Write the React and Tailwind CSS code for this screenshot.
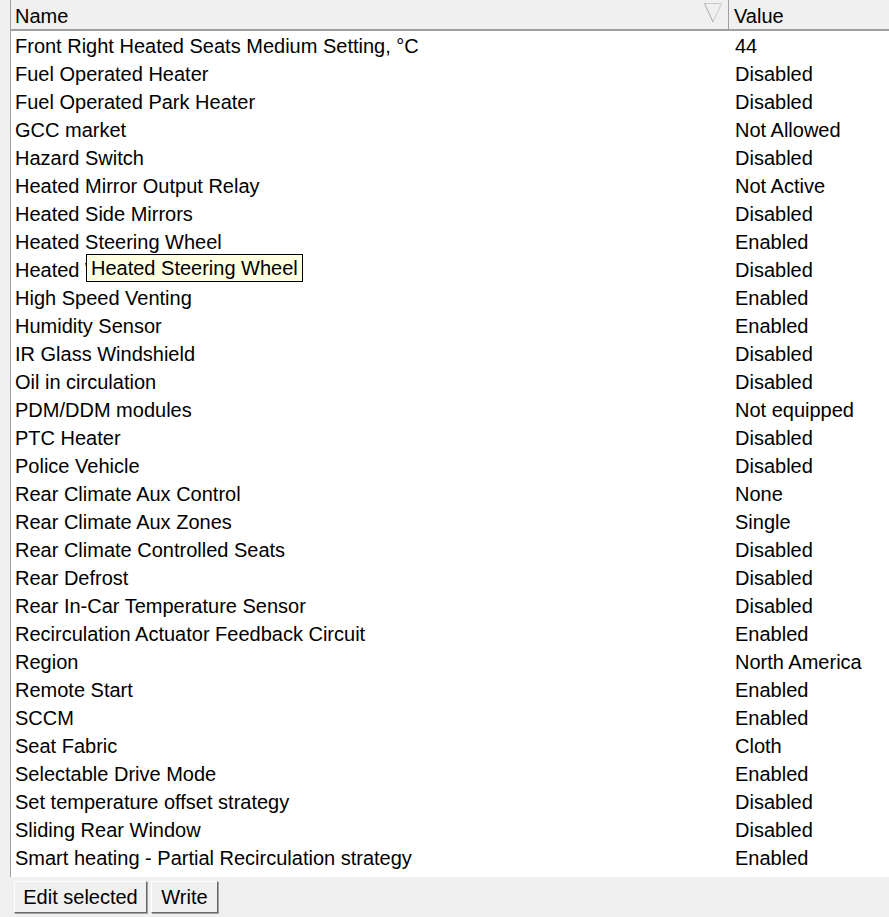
import React from "react";

const rows = [
  ["Front Right Heated Seats Medium Setting, °C", "44"],
  ["Fuel Operated Heater", "Disabled"],
  ["Fuel Operated Park Heater", "Disabled"],
  ["GCC market", "Not Allowed"],
  ["Hazard Switch", "Disabled"],
  ["Heated Mirror Output Relay", "Not Active"],
  ["Heated Side Mirrors", "Disabled"],
  ["Heated Steering Wheel", "Enabled"],
  ["Heated Windshield", "Disabled"],
  ["High Speed Venting", "Enabled"],
  ["Humidity Sensor", "Enabled"],
  ["IR Glass Windshield", "Disabled"],
  ["Oil in circulation", "Disabled"],
  ["PDM/DDM modules", "Not equipped"],
  ["PTC Heater", "Disabled"],
  ["Police Vehicle", "Disabled"],
  ["Rear Climate Aux Control", "None"],
  ["Rear Climate Aux Zones", "Single"],
  ["Rear Climate Controlled Seats", "Disabled"],
  ["Rear Defrost", "Disabled"],
  ["Rear In-Car Temperature Sensor", "Disabled"],
  ["Recirculation Actuator Feedback Circuit", "Enabled"],
  ["Region", "North America"],
  ["Remote Start", "Enabled"],
  ["SCCM", "Enabled"],
  ["Seat Fabric", "Cloth"],
  ["Selectable Drive Mode", "Enabled"],
  ["Set temperature offset strategy", "Disabled"],
  ["Sliding Rear Window", "Disabled"],
  ["Smart heating - Partial Recirculation strategy", "Enabled"],
];

function WinButton({ children, className }) {
  return (
    <button
      className={
        "h-[32px] bg-[#f0f0f0] text-black border border-t-white border-l-white border-r-[#696969] border-b-[#696969] shadow-[1px_1px_0_#a0a0a0] " +
        className
      }
    >
      {children}
    </button>
  );
}

export default function App() {
  return (
    <div
      className="w-[889px] h-[917px] bg-[#f0f0f0] flex flex-col overflow-hidden text-[20px] text-black"
      style={{ fontFamily: '"Liberation Sans", Arial, sans-serif' }}
    >
      <div className="flex-1 flex pl-[10px] min-h-0">
        <div className="flex-1 flex flex-col border-l border-[#a0a0a0] bg-white relative">
          {/* Header */}
          <div className="flex h-[31px] bg-[#f0f0f0] border-b-2 border-[#a0a0a0]">
            <div className="w-[718px] flex items-center pl-[4px] pt-[2px] relative border-r border-[#a0a0a0]">
              <span className="leading-none">Name</span>
              <svg
                className="absolute right-[6px] top-[3px]"
                width="18"
                height="20"
                viewBox="0 0 18 20"
              >
                <path d="M0.5 0.5 L17.5 0.5 L9 19" fill="none" stroke="#c8c8c8" strokeWidth="1" />
                <path d="M0.5 0.5 L9 19" fill="none" stroke="#a8a8a8" strokeWidth="1" />
              </svg>
            </div>
            <div className="flex-1 flex items-center pl-[5px] pt-[2px]">
              <span className="leading-none">Value</span>
            </div>
          </div>

          {/* Rows */}
          <div className="flex flex-col pt-[1px]">
            {rows.map(([name, value]) => (
              <div key={name} className="flex h-[28px] items-center">
                <div className="w-[719px] pl-[4px] whitespace-nowrap">{name}</div>
                <div className="flex-1 pl-[5px] whitespace-nowrap">{value}</div>
              </div>
            ))}
          </div>

          {/* Tooltip */}
          <div className="absolute left-[75px] top-[254px] h-[28px] px-[4px] flex items-center bg-[#ffffe1] border border-black whitespace-nowrap">
            Heated Steering Wheel
          </div>
        </div>
      </div>

      {/* Buttons */}
      <div className="h-[40px] bg-[#f0f0f0] flex items-start gap-[4px] pl-[14px] pt-[4px]">
        <WinButton className="w-[133px]">Edit selected</WinButton>
        <WinButton className="w-[67px]">Write</WinButton>
      </div>
    </div>
  );
}
